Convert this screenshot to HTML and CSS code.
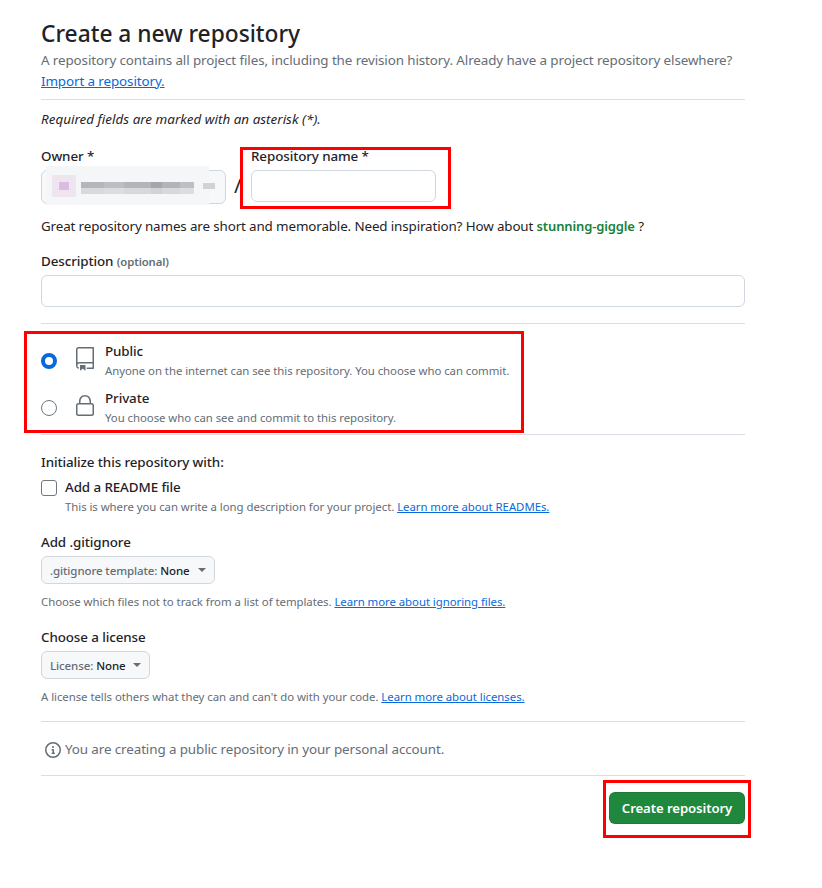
FILE: index.html
```html
<!DOCTYPE html>
<html lang="en">
  <head>
    <meta charset="UTF-8" />
    <meta name="viewport" content="width=device-width, initial-scale=1.0" />
    <title>Create a new repository</title>
    <link rel="stylesheet" href="styles.css">
  </head>
  <body>
    <form class="container">
      <h1 class="title">Create a new repository</h1>
      <p class="intro">A repository contains all project files, including the revision history. Already have a project repository elsewhere?</p>
      <a href="#" class="link intro-link">Import a repository.</a>
      <hr class="rule rule-top">
      <p class="required">Required fields are marked with an asterisk (*).</p>

      <div class="owner-row">
        <div class="owner-col">
          <div class="label">Owner *</div>
          <div class="owner-box">
            <!-- owner name was blurred out in the screenshot -->
            <div class="owner-patch">
              <span class="blur-avatar"></span>
              <span class="blur-name"></span>
              <span class="blur-tail"></span>
            </div>
          </div>
        </div>
        <span class="slash">/</span>
        <div class="name-col">
          <div class="label">Repository name *</div>
          <input class="input name-input" type="text">
          <span class="mark mark-name"></span>
        </div>
      </div>

      <p class="hint-line">Great repository names are short and memorable. Need inspiration? How about <b class="suggestion">stunning-giggle</b> ?</p>

      <div class="label desc-label">Description <span class="optional">(optional)</span></div>
      <input class="input desc-input" type="text">
      <hr class="rule rule-desc">

      <div class="visibility">
        <span class="mark mark-visibility"></span>
        <div class="vis-row">
          <span class="radio radio-on"></span>
          <svg class="vis-icon" viewBox="0 0 24 24" width="24" height="24"><path d="M3 2.75A2.75 2.75 0 0 1 5.75 0h14.5a.75.75 0 0 1 .75.75v20.5a.75.75 0 0 1-.75.75h-6a.75.75 0 0 1 0-1.5h5.25v-4H6A1.5 1.5 0 0 0 4.5 18v.75c0 .716.43 1.334 1.05 1.605a.75.75 0 0 1-.6 1.374A3.251 3.251 0 0 1 3 18.75ZM19.5 1.5H5.75c-.69 0-1.25.56-1.25 1.25v12.651A2.989 2.989 0 0 1 6 15h13.5Z"></path><path d="M7 18.25a.25.25 0 0 1 .25-.25h5a.25.25 0 0 1 .25.25v5.01a.25.25 0 0 1-.397.201l-2.206-1.604a.25.25 0 0 0-.294 0L7.397 23.46a.25.25 0 0 1-.397-.2Z"></path></svg>
          <div class="vis-text">
            <div class="vis-name">Public</div>
            <div class="small">Anyone on the internet can see this repository. You choose who can commit.</div>
          </div>
        </div>
        <div class="vis-row">
          <span class="radio"></span>
          <svg class="vis-icon" viewBox="0 0 24 24" width="24" height="24"><path d="M6 9V7.25C6 3.845 8.503 1 12 1s6 2.845 6 6.25V9h.5a2.5 2.5 0 0 1 2.5 2.5v8a2.5 2.5 0 0 1-2.5 2.5h-13A2.5 2.5 0 0 1 3 19.5v-8A2.5 2.5 0 0 1 5.5 9Zm-1.5 2.5v8a1 1 0 0 0 1 1h13a1 1 0 0 0 1-1v-8a1 1 0 0 0-1-1h-13a1 1 0 0 0-1 1Zm3-4.25V9h9V7.25c0-2.67-1.922-4.75-4.5-4.75-2.578 0-4.5 2.08-4.5 4.75Z"></path></svg>
          <div class="vis-text">
            <div class="vis-name">Private</div>
            <div class="small">You choose who can see and commit to this repository.</div>
          </div>
        </div>
      </div>
      <hr class="rule rule-vis">

      <div class="label init-label">Initialize this repository with:</div>
      <div class="readme-row">
        <span class="checkbox"></span>
        <span class="readme-name">Add a README file</span>
      </div>
      <p class="small readme-note">This is where you can write a long description for your project. <a href="#" class="link">Learn more about READMEs.</a></p>

      <div class="label select-label">Add .gitignore</div>
      <div class="select select-gitignore">.gitignore template: <b class="select-value">None</b><span class="caret"></span></div>
      <p class="small select-note">Choose which files not to track from a list of templates. <a href="#" class="link">Learn more about ignoring files.</a></p>

      <div class="label select-label">Choose a license</div>
      <div class="select select-license">License: <b class="select-value">None</b><span class="caret"></span></div>
      <p class="small select-note">A license tells others what they can and can't do with your code. <a href="#" class="link">Learn more about licenses.</a></p>
      <hr class="rule rule-license">

      <div class="notice">
        <svg class="notice-icon" viewBox="0 0 16 16" width="16" height="16"><path d="M0 8a8 8 0 1 1 16 0A8 8 0 0 1 0 8Zm8-6.5a6.5 6.5 0 1 0 0 13 6.5 6.5 0 0 0 0-13ZM6.5 7.75A.75.75 0 0 1 7.25 7h1a.75.75 0 0 1 .75.75v2.75h.25a.75.75 0 0 1 0 1.5h-2a.75.75 0 0 1 0-1.5h.25v-2h-.25a.75.75 0 0 1-.75-.75ZM8 6a1 1 0 1 1 0-2 1 1 0 0 1 0 2Z"></path></svg>
        <span>You are creating a public repository in your personal account.</span>
      </div>
      <hr class="rule rule-notice">

      <div class="actions">
        <button type="button" class="btn-create">Create repository</button>
        <span class="mark mark-btn"></span>
      </div>
    </form>
  </body>
</html>
```

FILE: styles.css
```css
body {
  font-family: "Noto Sans", "Open Sans", sans-serif;
  font-size: 13.4px;
  line-height: 21px;
  letter-spacing: -0.1px;
  color: #1f2328;
  background-color: #ffffff;
  margin: 0;
  padding: 0;
}

.container {
  width: 704px;
  margin-left: 41px;
  padding-top: 17px;
  padding-bottom: 40px;
}

.title {
  margin: 0;
  font-size: 22.75px;
  line-height: 33px;
  font-weight: 500;
  letter-spacing: 0;
}

.intro {
  margin: 0;
  color: #656d76;
  white-space: nowrap;
}

.link {
  color: #0969da;
  text-decoration: underline;
}

.intro-link {
  display: block;
}

.rule {
  border: none;
  border-top: 1px solid #d8dee4;
  margin: 0;
}

.rule-top {
  margin-top: 7px;
}

.required {
  margin: 9px 0 0;
  font-style: italic;
  letter-spacing: 0.03px;
}

/* owner + name */
.owner-row {
  display: flex;
  margin-top: 16px;
}

.owner-col {
  width: 185px;
}

.label {
  font-weight: 500;
  line-height: 21px;
}

.owner-box {
  position: relative;
  height: 32px;
  margin-top: 3px;
  border: 1px solid #d0d7de;
  border-radius: 6px;
  background-color: #f6f8fa;
}

.owner-patch {
  position: absolute;
  left: 4px;
  top: -5px;
  display: flex;
  align-items: center;
  width: 163px;
  height: 39px;
  background-color: #f5f6f8;
}

.blur-avatar {
  flex: none;
  width: 10px;
  height: 8px;
  margin-left: 13px;
  background-color: #dcbde2;
  box-shadow: 0 0 0 7px #eee5f1;
}

.blur-name {
  flex: none;
  width: 113px;
  height: 12px;
  margin: 5px 0 0 12px;
  background:
    linear-gradient(to bottom, transparent 50%, rgba(245, 246, 248, 0.55) 50%),
    linear-gradient(to right, #b4b6ba 0 20%, #bcbec2 20% 38%, #b3b5b9 38% 62%, #a4a6aa 62% 72%, #b2b4b8 72% 88%, #bdbfc3 88%);
}

.blur-tail {
  flex: none;
  width: 12px;
  height: 6px;
  margin-left: 9px;
  background-color: #d0d2d5;
}

.slash {
  width: 25px;
  padding: 21px 0 0 8px;
  box-sizing: border-box;
  font-size: 20px;
  line-height: 38px;
}

.name-col {
  position: relative;
  width: 185px;
}

.input {
  display: block;
  box-sizing: border-box;
  border: 1px solid #d0d7de;
  border-radius: 6px;
  background-color: #ffffff;
  padding: 0;
}

.name-input {
  width: 185px;
  height: 32px;
  margin-top: 3px;
}

.hint-line {
  margin: 11px 0 0;
  letter-spacing: -0.13px;
}

.suggestion {
  color: #1a7f37;
  font-size: 13px;
  font-weight: 600;
}

.desc-label {
  margin-top: 14px;
}

.optional {
  font-size: 11.3px;
  font-weight: 600;
  color: #656d76;
}

.desc-input {
  width: 704px;
  height: 32px;
  margin-top: 3px;
}

.rule-desc {
  margin-top: 16px;
}

/* visibility */
.visibility {
  position: relative;
  margin-top: 17px;
}

.vis-row {
  display: flex;
  height: 47px;
}

.radio {
  box-sizing: border-box;
  width: 16px;
  height: 16px;
  margin-top: 12px;
  border: 1px solid #6e7781;
  border-radius: 50%;
}

.radio-on {
  border: 4px solid #0969da;
}

.vis-icon {
  margin: 6px 0 0 16px;
  fill: #656d76;
}

.vis-text {
  margin-left: 8px;
}

.vis-name {
  font-weight: 500;
  line-height: 21px;
}

.small {
  font-size: 11.4px;
  line-height: 17px;
  color: #656d76;
  letter-spacing: -0.05px;
}

.rule-vis {
  margin-top: -1px;
}

.init-label {
  margin-top: 17px;
}

.readme-row {
  display: flex;
  align-items: center;
  margin-top: 4px;
  height: 21px;
}

.checkbox {
  box-sizing: border-box;
  width: 16px;
  height: 16px;
  border: 1px solid #6e7781;
  border-radius: 3px;
}

.readme-name {
  margin-left: 8px;
  font-weight: 500;
}

.readme-note {
  margin: 0 0 0 24px;
}

.select-label {
  margin-top: 17px;
}

.select {
  display: inline-flex;
  align-items: center;
  box-sizing: border-box;
  height: 28px;
  margin-top: 3px;
  padding: 0 8px;
  border: 1px solid #d0d7de;
  border-radius: 6px;
  background-color: #f6f8fa;
  font-size: 11.5px;
  font-weight: 500;
  color: #656d76;
  white-space: pre;
}

.select-gitignore {
  width: 174px;
}

.select-license {
  width: 109px;
}

.select-value {
  font-weight: 500;
  color: #1f2328;
}

.caret {
  margin-left: auto;
  border-top: 4px solid #656d76;
  border-left: 4px solid transparent;
  border-right: 4px solid transparent;
}

.select-note {
  margin: 9px 0 0;
}

.rule-license {
  margin-top: 16px;
}

.notice {
  display: flex;
  align-items: center;
  box-sizing: border-box;
  height: 53px;
  padding: 2px 0 0 4px;
  color: #656d76;
}

.notice-icon {
  margin-right: 4px;
  fill: #656d76;
}

.actions {
  position: relative;
  display: flex;
  justify-content: flex-end;
  margin-top: 16px;
}

.btn-create {
  width: 136px;
  height: 32px;
  border: 1px solid rgba(31, 35, 40, 0.15);
  border-radius: 6px;
  background-color: #1f883d;
  color: #ffffff;
  font-family: inherit;
  font-size: 13.2px;
  font-weight: 600;
  letter-spacing: -0.1px;
  padding: 0;
}

/* red annotation boxes drawn over the form */
.mark {
  position: absolute;
  box-sizing: border-box;
  border: 3px solid #ff0000;
  pointer-events: none;
}

.mark-name {
  left: -11px;
  top: 1px;
  width: 211px;
  height: 62px;
}

.mark-visibility {
  left: -17px;
  top: -10px;
  width: 500px;
  height: 102px;
}

.mark-btn {
  right: -6px;
  top: -12px;
  width: 148px;
  height: 58px;
}
```
